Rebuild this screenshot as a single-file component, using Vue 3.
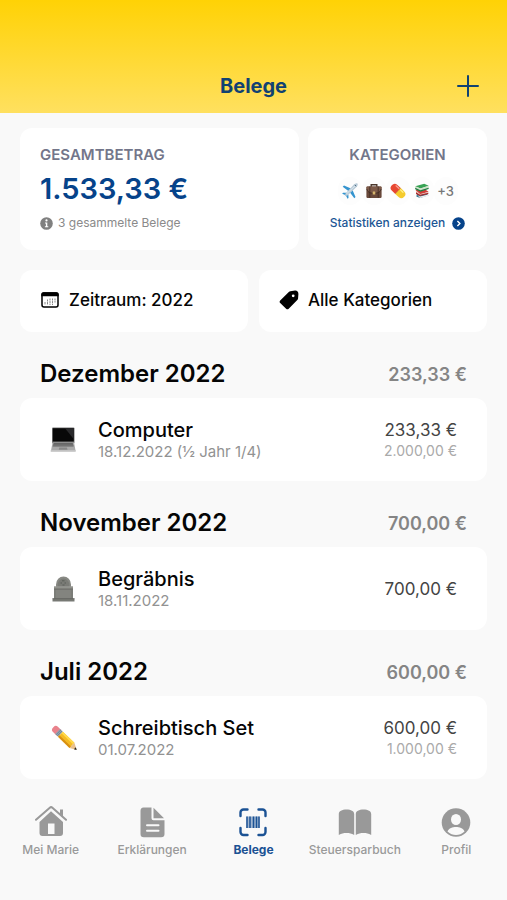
<script setup>
const groups = [
  {
    month: 'Dezember 2022', total: '233,33 €', icon: 'laptop', title: 'Computer',
    date: '18.12.2022 (½ Jahr 1/4)', amount: '233,33 €', full: '2.000,00 €',
  },
  {
    month: 'November 2022', total: '700,00 €', icon: 'grave', title: 'Begräbnis',
    date: '18.11.2022', amount: '700,00 €', full: '',
  },
  {
    month: 'Juli 2022', total: '600,00 €', icon: 'pencil', title: 'Schreibtisch Set',
    date: '01.07.2022', amount: '600,00 €', full: '1.000,00 €',
  },
]

const tabs = [
  { label: 'Mei Marie', icon: 'home' },
  { label: 'Erklärungen', icon: 'doc' },
  { label: 'Belege', icon: 'scan', active: true },
  { label: 'Steuersparbuch', icon: 'book' },
  { label: 'Profil', icon: 'person' },
]
</script>

<template>
  <div class="app">
    <header class="header">
      <h1>Belege</h1>
      <button class="add" type="button" aria-label="Beleg hinzufügen">
        <svg width="22" height="22" viewBox="0 0 22 22"><path d="M11 1v20M1 11h20" fill="none" stroke="currentColor" stroke-width="2" stroke-linecap="round" /></svg>
      </button>
    </header>

    <main class="content">
      <div class="summary">
        <section class="card total">
          <h2>GESAMTBETRAG</h2>
          <p class="sum">1.533,33 €</p>
          <p class="note">
            <svg width="13" height="13" viewBox="0 0 13 13"><circle cx="6.500" cy="6.500" r="6.300" fill="#808080" /><circle cx="6.500" cy="3.400" r="1.100" fill="#fff" /><path d="M5 5.400h2.300v3.800h1v1H4.900v-1h1V6.400H5z" fill="#fff" /></svg>
            <span>3 gesammelte Belege</span>
          </p>
        </section>
        <section class="card cats">
          <h2>KATEGORIEN</h2>
          <div class="emojis">
            <span class="chip">
              <svg width="16" height="16" viewBox="0 0 16 16">
                <path d="M9 5.500 2 2.500.7 3.700l6 4.500zM10.500 7l3 7-1.200 1.300-4.500-6z" fill="#3494cf" />
                <path d="M4.300 9.800 1 9.700l-.8 1 3.600 1.600 1.700 3.500 1-.8-.1-3.300z" fill="#3494cf" />
                <path d="M15.400.6c-.9-.9-2.600.1-3.700 1.200L3.500 10.500l-.8 2.800 2.800-.9 8.700-8.100c1.100-1.100 2.100-2.800 1.200-3.700z" fill="#b9cbd8" />
                <path d="m12.800 1.900 1.300 1.300" stroke="#49677d" />
                <path d="M4.500 10.800 13 3" stroke="#e5edf2" stroke-width=".8" />
              </svg>
            </span>
            <span class="chip">
              <svg width="16" height="16" viewBox="0 0 16 16">
                <path d="M5.200 4V1.800h5.600V4" fill="none" stroke="#4b372c" stroke-width="1.400" />
                <rect x=".4" y="3.500" width="15.200" height="11.500" rx="1.200" fill="#68483a" />
                <path d="M.4 5c1 4 4 5 7.600 5s6.600-1 7.600-5v-.5c0-.6-.6-1-1.200-1H1.600c-.6 0-1.200.4-1.200 1z" fill="#7c5948" />
                <path d="M.8 6c1 3.600 4 4.300 7.200 4.300s6.200-.7 7.200-4.300M3.800 3.500v11.300M12.200 3.500v11.300" fill="none" stroke="#3d2a22" stroke-width=".8" />
                <rect x="6.700" y="8.500" width="2.600" height="3" rx=".5" fill="#d5b36d" />
              </svg>
            </span>
            <span class="chip">
              <svg width="16" height="16" viewBox="0 0 16 16">
                <g transform="rotate(43 8 8)">
                  <path d="M8 4H3.500a4 4 0 0 0 0 8H8z" fill="#e74732" />
                  <path d="M8 4h4.500a4 4 0 0 1 0 8H8z" fill="#f5cb2e" />
                  <path d="M3 5.500h4" stroke="#f8a191" stroke-width="1.200" stroke-linecap="round" />
                  <path d="M9 5.500h3.500" stroke="#fff18a" stroke-width="1.200" stroke-linecap="round" />
                  <path d="M8 4v8" stroke="#c97b20" stroke-width=".6" />
                </g>
              </svg>
            </span>
            <span class="chip">
              <svg width="16" height="16" viewBox="0 0 16 16">
                <path d="m3 11 9-.8 2.500 2.100L6 15 2.300 13.500z" fill="#36718b" />
                <path d="m3.300 12.100 2.700 1.400 8-1.900v1.500L6 14.900z" fill="#eee" />
                <path d="m1.800 7 9-.7 3.800 2.500-8.400 2.600-3.800-1.600z" fill="#d23d38" />
                <path d="M2 7.400v2.500l4 2.400 8.200-2V9l-8.100 2z" fill="#e9c9bf" />
                <path d="M2 9.300v1.800l4 1.900 8.300-2v-1.200L6.100 11.800z" fill="#a8292c" />
                <path d="m1.200 3.200 9-2.500 4.500 2L6.500 5.500z" fill="#38a355" />
                <path d="M1.200 3.200v2.300l5.200 2.700 8.200-2.600V2.800L6.400 5.500z" fill="#cfe0c8" />
                <path d="m1.200 4.800 5.200 2.400 8.200-2.500V6L6.400 8.700 1.200 6.200z" fill="#207a41" />
              </svg>
            </span>
            <span class="chip more">+3</span>
          </div>
          <a href="#statistiken" class="stats">
            <span>Statistiken anzeigen</span>
            <svg width="13" height="13" viewBox="0 0 13 13"><circle cx="6.500" cy="6.500" r="6.300" fill="#06438a" /><path d="m5.400 3.900 2.500 2.600-2.500 2.600" fill="none" stroke="#fff" stroke-width="1.400" /></svg>
          </a>
        </section>
      </div>

      <div class="filters">
        <button class="card filter" type="button">
          <svg width="20" height="18" viewBox="0 0 20 18">
            <rect x="2" y="2" width="16" height="14" rx="2" fill="#fff" stroke="#000" stroke-width="1.500" />
            <path d="M1.300 5.300V3.300a2 2 0 0 1 2-2h13.400a2 2 0 0 1 2 2v2z" />
            <path d="M5 11v3M7.500 8.500V14M10 7.500V14M12.500 7.500V14M15 7.500v4" stroke="#888" stroke-dasharray="2 .6" />
          </svg>
          <span>Zeitraum: 2022</span>
        </button>
        <button class="card filter" type="button">
          <svg width="20" height="20" viewBox="0 0 20 20">
            <path fill-rule="evenodd" d="M11.400 1.200 16 .6c2-.2 3.500 1.200 3.400 3.300l-.3 4.300c0 .7-.3 1.200-.8 1.700l-8.600 8.800c-.8.8-1.800.8-2.600 0L1.200 13c-.8-.8-.8-1.800 0-2.600l8.600-8.500c.4-.4 1-.7 1.600-.7zM14.200 4.400a1.400 1.400 0 1 0 0 2.800 1.400 1.400 0 0 0 0-2.800z" />
          </svg>
          <span>Alle Kategorien</span>
        </button>
      </div>

      <section v-for="g in groups" :key="g.month" class="group">
        <div class="group-head">
          <h2>{{ g.month }}</h2>
          <span>{{ g.total }}</span>
        </div>
        <article class="card entry">
          <svg v-if="g.icon === 'laptop'" width="28" height="28" viewBox="0 0 28 28">
            <rect x="2" y="1.500" width="22.500" height="16" rx="1" fill="#777" />
            <path d="M2.800 2.200h21v13.300h-21z" fill="#080808" />
            <path d="m15 2.200 8.800 11v-11z" fill="#29292b" />
            <path d="M2.500 16.500h21.500l1.500 8H1z" fill="#aaa" />
            <path d="M3.700 16.900h19l1 3.700h-21z" fill="#626262" />
            <path d="M3.300 18.200h19.800M3 19.500h20.500" stroke="#858585" stroke-width=".5" />
            <path d="M9.300 21.500h7.600l.6 2.300H8.800z" fill="#888" />
            <path d="M.7 24h25v1.800h-25z" fill="#c2c2c2" />
          </svg>
          <svg v-else-if="g.icon === 'grave'" width="28" height="28" viewBox="0 0 28 28">
            <path d="M6 12V9.500a7.500 8 0 0 1 15 0V12z" fill="#888984" />
            <path d="M7.700 12V9.800a5.800 6.200 0 0 1 11.600 0V12z" fill="#7a7b76" />
            <path d="M10.500 8h1.500m2.500 0H16M12 5.800h2.500M12.500 10h2" stroke="#5b5e58" />
            <path d="M4 11.500h19V24H4z" fill="#83847f" />
            <path d="M4 12h19" stroke="#a0a19c" />
            <path d="M4 14.300h19" stroke="#6b6c68" stroke-width=".8" />
            <path d="M5 14.500v9M22 14.500v9" stroke="#72736f" stroke-width=".8" />
            <path d="M2.500 23.500h22v3h-22z" fill="#777974" />
            <path d="M2.500 23.700h22" stroke="#5f605c" stroke-width=".8" />
          </svg>
          <svg v-else width="28" height="28" viewBox="0 0 28 28">
            <g transform="translate(2 1) rotate(44 2 3)">
              <path d="M4 -.5h5v7H4a3 3 0 0 1-3-3v-1a3 3 0 0 1 3-3z" fill="#e9828c" />
              <path d="M7 -.5h4v7H7z" fill="#91a3b1" />
              <path d="M8.300 -.5v7M9.800 -.5v7" stroke="#5e7180" stroke-width=".5" />
              <path d="M11 -.5h16v7H11z" fill="#f5bb24" />
              <path d="M11 -.5h16v2H11z" fill="#ffda4d" />
              <path d="M11 4.500h16v2H11z" fill="#d88f12" />
              <path d="m27 -.5 6.500 3.500L27 6.500z" fill="#e9c18d" />
              <path d="m31 1.600 2.500 1.400L31 4.400z" fill="#252525" />
            </g>
          </svg>
          <div class="info">
            <h3>{{ g.title }}</h3>
            <p>{{ g.date }}</p>
          </div>
          <div class="amounts">
            <span class="amount">{{ g.amount }}</span>
            <span v-if="g.full" class="full">{{ g.full }}</span>
          </div>
        </article>
      </section>
    </main>

    <nav class="tabs">
      <a v-for="t in tabs" :key="t.label" href="#" :class="{ active: t.active }">
        <svg v-if="t.icon === 'home'" width="34" height="32" viewBox="0 0 34 32">
          <path d="M2 13.800 15.800 1.700a2 2 0 0 1 2.600 0L32 13.800" fill="none" stroke="currentColor" stroke-width="2" stroke-linecap="round" />
          <path d="M26 3.500h3v7l-3-2.600z" fill="currentColor" />
          <path fill-rule="evenodd" d="M17 5.300 29 16v11a3 3 0 0 1-3 3H8.500a3 3 0 0 1-3-3V16zM14 17.500V28h6.500V17.500z" fill="currentColor" />
        </svg>
        <svg v-else-if="t.icon === 'doc'" width="34" height="32" viewBox="0 0 34 32">
          <path d="M8.500 1.500h8v10.800a2 2 0 0 0 2 2h11V28a3.300 3.300 0 0 1-3.300 3.300H8.800A3.300 3.300 0 0 1 5.500 28V4.800a3.300 3.300 0 0 1 3-3.300z" fill="currentColor" />
          <path d="m18.500 1.800 10.500 10.500H18.500z" fill="currentColor" />
          <path d="M12 19.200h11.500M12 24.800h11.500" stroke="#f9f9f9" stroke-width="2" stroke-linecap="round" />
        </svg>
        <svg v-else-if="t.icon === 'scan'" width="34" height="32" viewBox="0 0 34 32">
          <path d="M4.500 10V6.500a3 3 0 0 1 3-3h4M22.500 3.500h4a3 3 0 0 1 3 3V10M29.500 22v4a3 3 0 0 1-3 3h-4M11.500 29h-4a3 3 0 0 1-3-3v-4" fill="none" stroke="currentColor" stroke-width="2.400" stroke-linecap="round" />
          <path d="M10.500 10.500h13v11.500h-13z" fill="currentColor" opacity=".4" />
          <path d="M11 10.500V22M14 10.500V22M17.500 10.500V22M20.500 10.500V22M23 10.500V22" stroke="currentColor" stroke-width="1.500" />
        </svg>
        <svg v-else-if="t.icon === 'book'" width="34" height="32" viewBox="0 0 34 32">
          <path d="M.8 8C.8 5 4 3.500 8.500 3.500S16.200 5 16.200 8v21c-2.700-1.500-4.700-2-7.700-2s-5 .5-7.700 2zM17.800 8c0-3 3.200-4.500 7.700-4.500S33.200 5 33.200 8v21c-2.700-1.500-4.700-2-7.700-2s-5 .5-7.700 2z" fill="currentColor" />
        </svg>
        <svg v-else width="34" height="32" viewBox="0 0 34 32">
          <circle cx="17" cy="16.500" r="14.300" fill="currentColor" />
          <ellipse cx="17" cy="13.500" rx="5" ry="5.600" fill="#f9f9f9" />
          <path d="M8.500 25.500c1.500-3.500 5-4.500 8.500-4.500s7 1 8.500 4.500C23 28 20 29 17 29s-6-1-8.500-3.500z" fill="#f9f9f9" />
        </svg>
        <span>{{ t.label }}</span>
      </a>
    </nav>
  </div>
</template>

<style>
body {
  margin: 0;
  background: #f9f9f9;
}
</style>

<style scoped>
.app {
  min-height: 100vh;
  display: flex;
  flex-direction: column;
  background: #f9f9f9;
  color: #050505;
  font-family: Inter, "Liberation Sans", sans-serif;
}
h1, h2, h3, p {
  margin: 0;
}
svg {
  flex: none;
}
button {
  font: inherit;
  color: inherit;
  border: 0;
}
a {
  color: inherit;
  text-decoration: none;
}
.header {
  display: grid;
  grid-template-columns: 1fr auto 1fr;
  align-items: center;
  padding: 72px 28px 13px;
  background: linear-gradient(#ffd205, #ffe05f);
  color: #114272;
}
.header h1 {
  grid-column: 2;
  font-size: 20px;
  line-height: 28px;
  font-weight: 700;
}
.add {
  display: flex;
  justify-self: end;
  padding: 0;
  background: none;
}
.content {
  display: flex;
  flex-direction: column;
  padding: 15px 20px 0;
}
.card {
  background: #fff;
  border-radius: 12px;
}
.summary {
  display: grid;
  grid-template-columns: 279fr 179fr;
  gap: 9px;
}
.summary h2 {
  font-size: 15px;
  line-height: 20px;
  font-weight: 600;
  color: #73768a;
}
.total {
  padding: 17px 20px 18px;
}
.sum {
  margin-top: 4px;
  font-size: 29px;
  line-height: 40px;
  font-weight: 600;
  color: #06438a;
}
.note {
  display: flex;
  align-items: center;
  gap: 5px;
  margin-top: 5px;
  font-size: 12px;
  line-height: 18px;
  color: #8a8a8a;
}
.cats {
  display: flex;
  flex-direction: column;
  align-items: center;
  padding: 17px 8px 18px;
}
.emojis {
  display: flex;
  margin-top: 12px;
}
.chip {
  display: flex;
  align-items: center;
  justify-content: center;
  width: 24px;
  height: 28px;
  border-radius: 14px;
  background: #fdfdfd;
}
.more {
  font-size: 13px;
  font-weight: 500;
  color: #777;
}
.stats {
  display: flex;
  align-items: center;
  gap: 7px;
  margin-top: 9px;
  font-size: 12px;
  line-height: 18px;
  font-weight: 500;
  color: #1d5795;
}
.filters {
  display: grid;
  grid-template-columns: 1fr 1fr;
  gap: 11px;
  margin-top: 20px;
}
.filter {
  display: flex;
  align-items: center;
  gap: 9px;
  padding: 18px 20px 20px;
  font-size: 17px;
  line-height: 24px;
  font-weight: 500;
}
.group-head {
  display: flex;
  justify-content: space-between;
  align-items: center;
  padding: 26px 20px 8px;
}
.group-head h2 {
  font-size: 24px;
  line-height: 32px;
  font-weight: 600;
}
.group-head span {
  font-size: 18px;
  font-weight: 600;
  color: #858585;
}
.entry {
  display: flex;
  align-items: center;
  min-height: 83px;
  padding: 0 30px;
}
.info {
  flex: 1;
  margin-left: 20px;
}
.info h3 {
  font-size: 20px;
  line-height: 24px;
  font-weight: 500;
}
.info p {
  font-size: 15px;
  line-height: 20px;
  color: #929292;
}
.amounts {
  display: flex;
  flex-direction: column;
  align-items: flex-end;
}
.amount {
  font-size: 17px;
  line-height: 22px;
  color: #444;
}
.full {
  font-size: 14px;
  line-height: 20px;
  color: #aaa;
}
.tabs {
  display: grid;
  grid-template-columns: repeat(5, 1fr);
  padding: 27px 0 30px;
}
.tabs a {
  display: flex;
  flex-direction: column;
  align-items: center;
  gap: 3px;
  font-size: 12px;
  line-height: 18px;
  font-weight: 500;
  color: #999;
}
.tabs .active {
  font-weight: 700;
  color: #1b5294;
}
</style>
